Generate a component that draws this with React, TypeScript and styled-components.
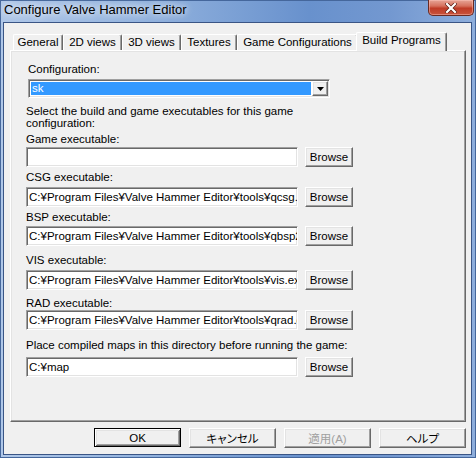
import React from 'react';
import styled, { createGlobalStyle } from 'styled-components';

const FONT = `"Liberation Sans", Arial, "Noto Sans CJK JP", sans-serif`;

const Global = createGlobalStyle`
  html, body { margin: 0; padding: 0; background: #ffffff; }
  body { font-family: ${FONT}; }
  * { box-sizing: border-box; }
`;

const raised = `
  border: 1px solid;
  border-color: #ffffff #696969 #696969 #ffffff;
  box-shadow: inset -1px -1px #a0a0a0, inset 1px 1px #e3e3e3;
`;

const sunken = `
  border: 1px solid;
  border-color: #a0a0a0 #ffffff #ffffff #a0a0a0;
  box-shadow: inset 1px 1px #696969, inset -1px -1px #e3e3e3;
`;

const Window = styled.div`
  width: 476px;
  height: 458px;
  display: flex;
  flex-direction: column;
  border: 1px solid #45679c;
  background: linear-gradient(to right, #afc7e8 0%, #93b3de 30%, #6891cd 65%, #7398d0 82%, #8eaedc 100%);
`;

const TitleBar = styled.div`
  height: 21px;
  display: flex;
  align-items: flex-start;
  justify-content: space-between;
`;

const Title = styled.div`
  padding: 1px 0 0 3px;
  font-family: ${FONT};
  font-size: 13px;
  line-height: 16px;
  color: #000;
  text-shadow: 0 0 6px rgba(255, 255, 255, 0.9), 0 0 10px rgba(255, 255, 255, 0.7);
`;

const CloseButton = styled.div`
  width: 46px;
  height: 16px;
  margin: -1px 1px 0 0;
  display: flex;
  align-items: center;
  justify-content: center;
  border: 1px solid #6a2a22;
  border-top: none;
  border-radius: 0 0 5px 5px;
  background: linear-gradient(#e6a496 0%, #d6705d 40%, #bf3b27 55%, #c8543d 100%);
  box-shadow: inset 0 0 0 1px rgba(255, 200, 190, 0.45);
`;

const Client = styled.div`
  flex: 1;
  margin: 0 3px 2px 2px;
  border: 1px solid #3a5585;
  background: #f0f0f0;
  padding: 9px 5px 0 6px;
  display: flex;
  flex-direction: column;
`;

const TabStrip = styled.div`
  display: flex;
  align-items: flex-end;
  padding-left: 3px;
  margin-bottom: -1px;
  position: relative;
  z-index: 1;
`;

const Tab = styled.div<{ $w: number; $active?: boolean }>`
  width: ${(p) => p.$w}px;
  height: ${(p) => (p.$active ? 19 : 16)}px;
  margin: ${(p) => (p.$active ? '0 -2px 0 -2px' : '0 0 1px 0')};
  position: relative;
  z-index: ${(p) => (p.$active ? 2 : 1)};
  background: #f0f0f0;
  border-top: 1px solid #ffffff;
  border-left: 1px solid #ffffff;
  border-right: 1px solid #696969;
  border-radius: 2px 2px 0 0;
  box-shadow: inset -1px 0 #a0a0a0;
  font-size: 11.5px;
  line-height: ${(p) => (p.$active ? 14 : 15)}px;
  text-align: center;
  color: #000;
  white-space: nowrap;
`;

const Panel = styled.div`
  height: 372px;
  ${raised}
  padding: 12px 0 0 15px;
  display: flex;
  flex-direction: column;
  align-items: flex-start;
`;

const Label = styled.div<{ $mt?: number; $ml?: number }>`
  margin-top: ${(p) => p.$mt ?? 0}px;
  margin-left: ${(p) => p.$ml ?? 0}px;
  font-size: 11.5px;
  line-height: 12px;
  color: #000;
  white-space: pre-line;
`;

const Combo = styled.div`
  margin: 4px 0 0 2px;
  width: 302px;
  height: 19px;
  ${sunken}
  background: #ffffff;
  padding: 1px;
  display: flex;
`;

const ComboValue = styled.div`
  flex: 1;
  margin: 1px;
  padding-left: 1px;
  background: #3399ff;
  color: #ffffff;
  font-size: 11.5px;
  line-height: 13px;
`;

const DropButton = styled.div`
  width: 16px;
  height: 15px;
  ${raised}
  background: #f0f0f0;
  display: flex;
  align-items: center;
  justify-content: center;
`;

const Row = styled.div<{ $mt: number }>`
  margin-top: ${(p) => p.$mt}px;
  display: flex;
  height: 20px;
`;

const TextBox = styled.input`
  width: 272px;
  height: 20px;
  ${sunken}
  background: #ffffff;
  padding: 0 0 0 2px;
  font-family: ${FONT};
  font-size: 11.5px;
  color: #000;
  outline: none;
`;

const Button = styled.button<{ $w: number; $default?: boolean; $disabled?: boolean }>`
  width: ${(p) => p.$w}px;
  height: ${(p) => (p.$default ? 19 : 20)}px;
  padding: 0;
  background: #f0f0f0;
  font-family: ${FONT};
  font-size: 11.5px;
  font-feature-settings: 'palt';
  color: ${(p) => (p.$disabled ? '#a0a0a0' : '#000')};
  ${raised}
  ${(p) =>
    p.$default
      ? `border: 1px solid #000;
         box-shadow: inset 1px 1px #ffffff, inset -1px -1px #696969, inset 2px 2px #e3e3e3, inset -2px -2px #a0a0a0;`
      : ''}
`;

const BrowseButton = styled(Button)`
  margin-left: 7px;
`;

const ButtonBar = styled.div`
  margin-top: 6px;
  display: flex;
  justify-content: flex-end;
  gap: 8px;
`;

const tabs = [
  { label: 'General', w: 50 },
  { label: '2D views', w: 59 },
  { label: '3D views', w: 59 },
  { label: 'Textures', w: 56 },
  { label: 'Game Configurations', w: 121 },
  { label: 'Build Programs', w: 91, active: true },
];

const base = 'C:¥Program Files¥Valve Hammer Editor¥tools¥';

const fields = [
  { label: 'Game executable:', value: '', lt: 4, it: 2 },
  { label: 'CSG executable:', value: base + 'qcsg.exe', lt: 4, it: 4 },
  { label: 'BSP executable:', value: base + 'qbsp2.exe', lt: 4, it: 3 },
  { label: 'VIS executable:', value: base + 'vis.exe', lt: 8, it: 4 },
  { label: 'RAD executable:', value: base + 'qrad.exe', lt: 7, it: 1 },
  { label: 'Place compiled maps in this directory before running the game:', value: 'C:¥map', lt: 9, it: 6 },
];

export default function App() {
  return (
    <>
      <Global />
      <Window>
        <TitleBar>
          <Title>Configure Valve Hammer Editor</Title>
          <CloseButton>
            <svg width="12" height="10" viewBox="0 0 12 10">
              <path d="M2 1 L10 9 M10 1 L2 9" stroke="#5a1a12" strokeWidth="3.6" strokeLinecap="square" />
              <path d="M2 1 L10 9 M10 1 L2 9" stroke="#ffffff" strokeWidth="2.2" strokeLinecap="square" />
            </svg>
          </CloseButton>
        </TitleBar>
        <Client>
          <TabStrip>
            {tabs.map((t) => (
              <Tab key={t.label} $w={t.w} $active={t.active}>
                {t.label}
              </Tab>
            ))}
          </TabStrip>
          <Panel>
            <Label $ml={2}>Configuration:</Label>
            <Combo>
              <ComboValue>sk</ComboValue>
              <DropButton>
                <svg width="7" height="4" viewBox="0 0 7 4">
                  <path d="M0 0 H7 L3.5 4 Z" fill="#000" />
                </svg>
              </DropButton>
            </Combo>
            <Label $mt={7}>{'Select the build and game executables for this game\nconfiguration:'}</Label>
            {fields.map((f) => (
              <React.Fragment key={f.label}>
                <Label $mt={f.lt}>{f.label}</Label>
                <Row $mt={f.it}>
                  <TextBox readOnly value={f.value} />
                  <BrowseButton $w={48}>Browse</BrowseButton>
                </Row>
              </React.Fragment>
            ))}
          </Panel>
          <ButtonBar>
            <Button $w={87} $default>OK</Button>
            <Button $w={87}>キャンセル</Button>
            <Button $w={87} $disabled>適用(A)</Button>
            <Button $w={87}>ヘルプ</Button>
          </ButtonBar>
        </Client>
      </Window>
    </>
  );
}
